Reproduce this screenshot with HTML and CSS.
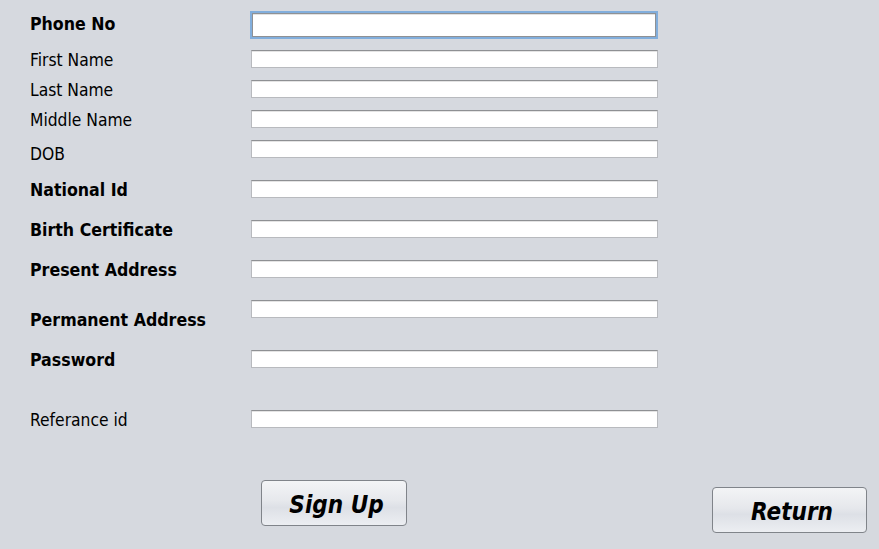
FILE: index.html
```html
<!DOCTYPE html>
<html>
<head>
<meta charset="utf-8">
<link rel="stylesheet" href="styles.css">
</head>
<body>
<div class="page">
  <form class="form">
    <div class="row row-first">
      <label class="lbl bold off-3">Phone No</label>
      <input class="field field-focus" type="text">
    </div>
    <div class="row gap-11">
      <label class="lbl">First Name</label>
      <input class="field" type="text">
    </div>
    <div class="row gap-12">
      <label class="lbl">Last Name</label>
      <input class="field" type="text">
    </div>
    <div class="row gap-12">
      <label class="lbl">Middle Name</label>
      <input class="field" type="text">
    </div>
    <div class="row gap-12">
      <label class="lbl off-4">DOB</label>
      <input class="field" type="text">
    </div>
    <div class="row gap-22">
      <label class="lbl bold">National Id</label>
      <input class="field" type="text">
    </div>
    <div class="row gap-22">
      <label class="lbl bold">Birth Certificate</label>
      <input class="field" type="text">
    </div>
    <div class="row gap-22">
      <label class="lbl bold">Present Address</label>
      <input class="field" type="text">
    </div>
    <div class="row gap-22">
      <label class="lbl bold off-10">Permanent Address</label>
      <input class="field" type="text">
    </div>
    <div class="row gap-32">
      <label class="lbl bold">Password</label>
      <input class="field" type="password">
    </div>
    <div class="row gap-42">
      <label class="lbl">Referance id</label>
      <input class="field" type="text">
    </div>
    <div class="actions">
      <button type="button" class="btn btn-signup">Sign Up</button>
      <button type="button" class="btn btn-return">Return</button>
    </div>
  </form>
</div>
</body>
</html>
```
FILE: styles.css
```css
html, body {
  margin: 0;
  padding: 0;
  background: #d6d9df;
}
.page {
  width: 879px;
  height: 549px;
  overflow: hidden;
  background: #d6d9df;
  font-family: "DejaVu Sans Condensed", "DejaVu Sans", sans-serif;
  color: #000;
}
.form {
  display: flex;
  flex-direction: column;
  padding: 11px 0 0 30px;
  margin: 0;
}
.row {
  display: flex;
  align-items: flex-start;
  height: 18px;
}
.row-first {
  height: 28px;
}
.gap-11 { margin-top: 11px; }
.gap-12 { margin-top: 12px; }
.gap-22 { margin-top: 22px; }
.gap-32 { margin-top: 32px; }
.gap-42 { margin-top: 42px; }
.lbl {
  width: 221px;
  flex: none;
  font-size: 17.3px;
  line-height: 18px;
  padding-top: 1px;
  white-space: nowrap;
}
.bold {
  font-weight: bold;
  font-size: 17.6px;
}
.off-3 { margin-top: 3px; }
.off-4 { margin-top: 4px; }
.off-10 { margin-top: 10px; }
.field {
  box-sizing: border-box;
  width: 407px;
  height: 18px;
  margin: 0;
  padding: 0 4px;
  background: #fff;
  border: 1px solid #b8babe;
  border-top-color: #8e9093;
  box-shadow: inset 0 1px 0 #e4e4e4;
  outline: none;
  font-family: inherit;
  font-size: 14px;
}
.field-focus {
  width: 408px;
  height: 28px;
  margin-left: -1px;
  border: 2px solid #82aedc;
  box-shadow: inset 0 0 0 1px #8f9194, inset 0 2px 0 #e2e2e2;
}
.actions {
  display: flex;
  align-items: flex-start;
  margin-top: 52px;
}
.btn {
  box-sizing: border-box;
  height: 46px;
  border: 1px solid #80848a;
  border-radius: 4px;
  background: linear-gradient(#f3f4f6 0%, #e6e8ec 45%, #dde0e6 60%, #eceef2 100%);
  font-family: "DejaVu Sans Condensed", "DejaVu Sans", sans-serif;
  font-weight: bold;
  font-style: italic;
  font-size: 24px;
  color: #000;
  padding: 4px 0 0 5px;
}
.btn-signup {
  width: 146px;
  margin-left: 231px;
}
.btn-return {
  width: 155px;
  margin-left: auto;
  margin-right: 12px;
  margin-top: 7px;
}
```
